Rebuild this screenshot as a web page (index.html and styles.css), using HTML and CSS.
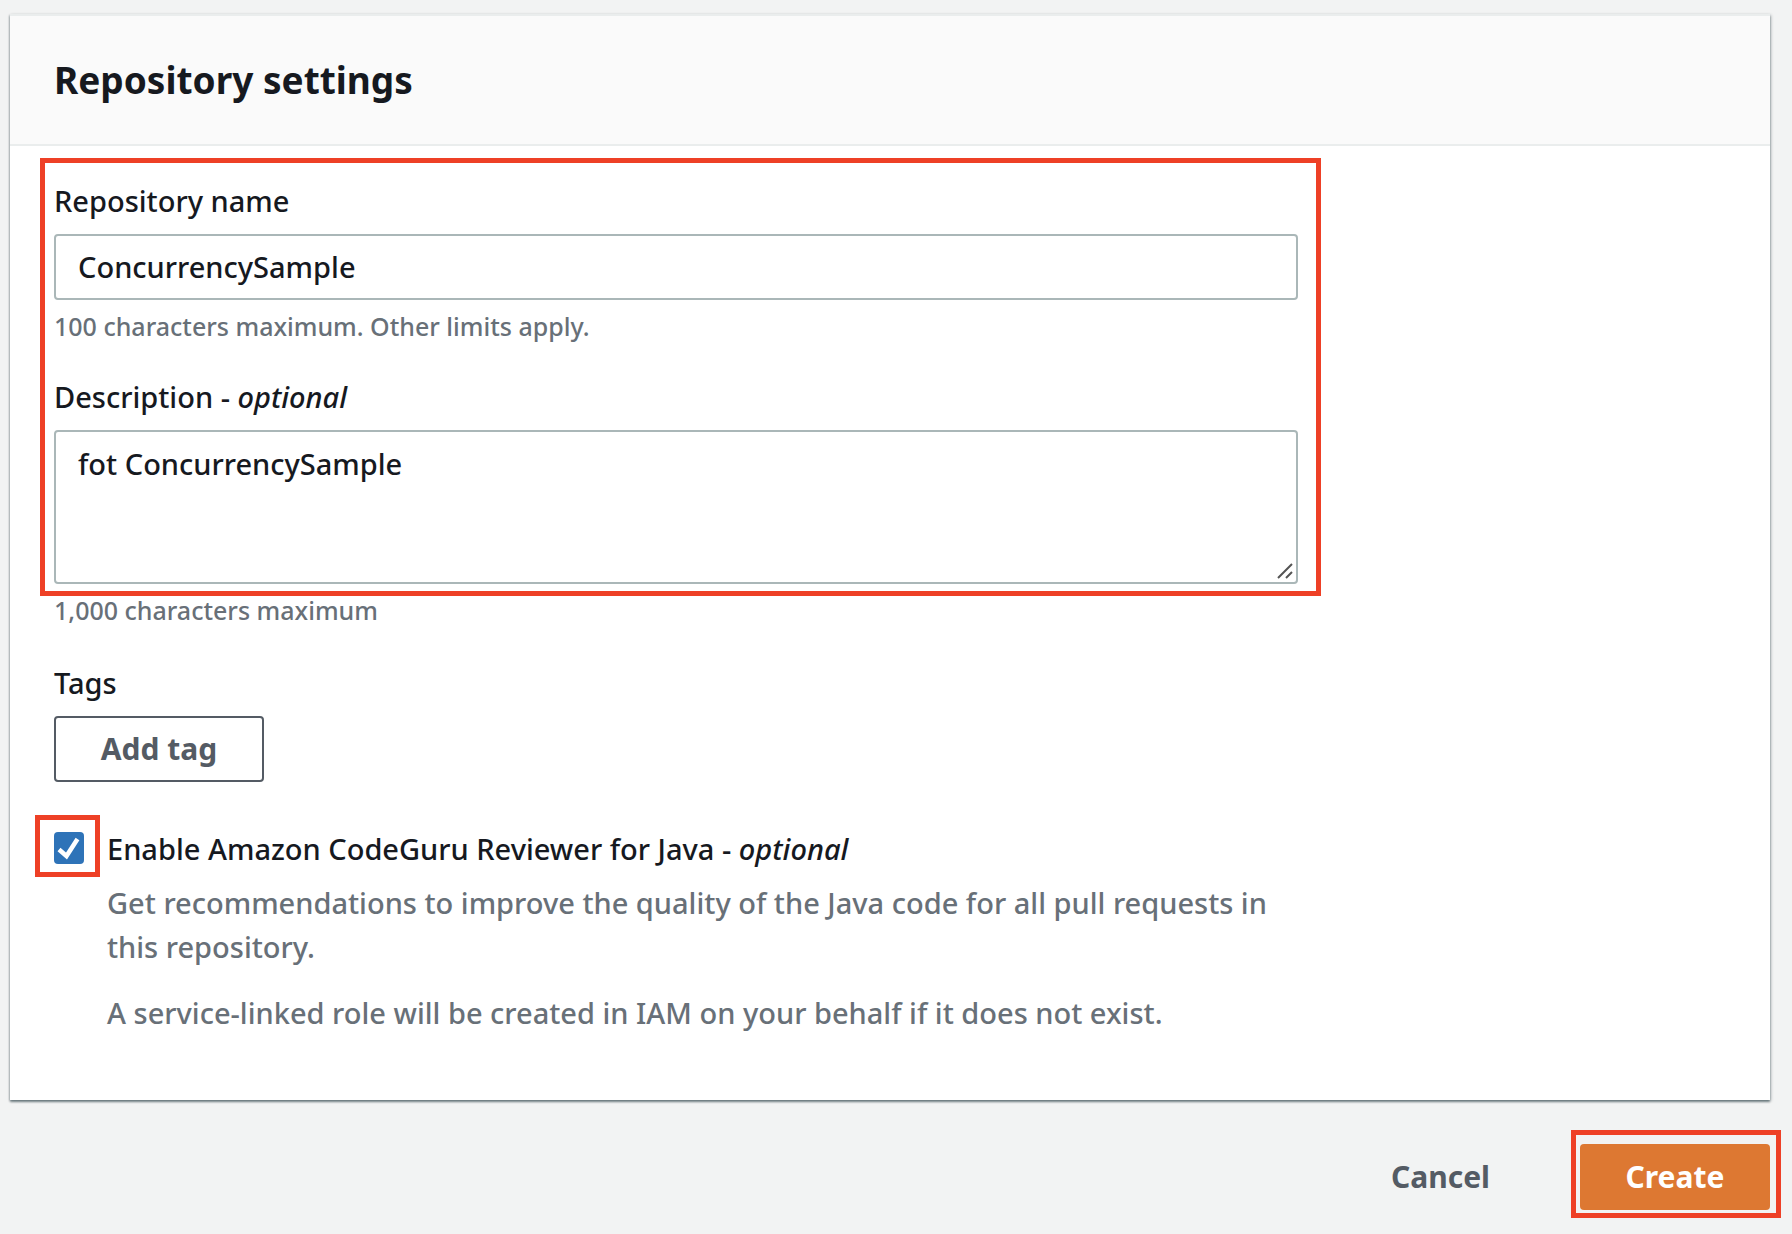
FILE: index.html
```html
<!DOCTYPE html>
<html lang="en">
<head>
  <meta charset="utf-8">
  <meta name="viewport" content="width=device-width, initial-scale=1">
  <title>Create repository</title>
  <link rel="stylesheet" href="styles.css">
</head>
<body>
  <form class="page">
    <section class="card">
      <header class="card-header">
        <h2 class="card-title">Repository settings</h2>
      </header>
      <div class="card-body">
        <div class="fields marked marked-fields">
          <div class="field">
            <label class="label" for="repo-name">Repository name</label>
            <input class="control input" id="repo-name" type="text" value="ConcurrencySample" aria-describedby="repo-name-hint">
            <p class="hint" id="repo-name-hint">100 characters maximum. Other limits apply.</p>
          </div>
          <div class="field">
            <label class="label" for="repo-desc">Description - <em>optional</em></label>
            <div class="textarea-wrap">
              <textarea class="control textarea" id="repo-desc" aria-describedby="repo-desc-hint">fot ConcurrencySample</textarea>
              <svg class="grip" viewBox="0 0 16 16" aria-hidden="true"><path d="M1 15 15 1M9 15l6-6"/></svg>
            </div>
          </div>
        </div>
        <p class="hint" id="repo-desc-hint">1,000 characters maximum</p>

        <div class="field tags">
          <h3 class="label">Tags</h3>
          <button class="button button-normal" type="button">Add tag</button>
        </div>

        <div class="option">
          <span class="tick marked marked-tick"><input class="checkbox" id="codeguru" type="checkbox" checked aria-describedby="codeguru-text"></span>
          <div class="option-content">
            <label class="option-label" for="codeguru">Enable Amazon CodeGuru Reviewer for Java - <em>optional</em></label>
            <div class="option-text" id="codeguru-text">
              <p>Get recommendations to improve the quality of the Java code for all pull requests in this repository.</p>
              <p>A service-linked role will be created in IAM on your behalf if it does not exist.</p>
            </div>
          </div>
        </div>
      </div>
    </section>

    <div class="actions">
      <button class="button button-link" type="button">Cancel</button>
      <span class="marked marked-create"><button class="button button-primary" type="submit">Create</button></span>
    </div>
  </form>
</body>
</html>
```
FILE: styles.css
```css
*,
*::before,
*::after {
  box-sizing: border-box;
}

body {
  margin: 0;
  background: #f2f3f3;
  color: #16191f;
  font-family: "Noto Sans", "Open Sans", sans-serif;
  font-size: 29px;
  font-weight: 500;
  line-height: 44px;
}

h2,
h3,
p {
  margin: 0;
}

.page {
  padding: 14px 22px 24px 10px;
}

/* Card */
.card {
  background: #fff;
  border-top: 2px solid #eaeded;
  box-shadow: 0 2px 2px 0 rgba(0, 28, 36, 0.4), 1px 1px 3px 0 rgba(0, 28, 36, 0.25), -1px 1px 2px 0 rgba(0, 28, 36, 0.15);
}

.card-header {
  padding: 42px 44px;
  background: #fafafa;
  border-bottom: 2px solid #eaeded;
}

.card-title {
  font-size: 37px;
  line-height: 44px;
  font-weight: 700;
}

.card-body {
  padding: 35px 44px 65px;
}

/* Fields */
.fields {
  display: flex;
  flex-direction: column;
  gap: 32px;
  max-width: 1244px;
}

.field {
  display: flex;
  flex-direction: column;
  align-items: flex-start;
}

.label {
  margin-bottom: 13px;
  font-size: 29px;
  line-height: 40px;
  font-weight: 500;
}

.control {
  display: block;
  width: 100%;
  margin: 0;
  border: 2px solid #aab7b8;
  border-radius: 4px;
  background: #fff;
  color: inherit;
  font: inherit;
}

.input {
  height: 66px;
  padding: 0 22px 2px;
}

.textarea-wrap {
  position: relative;
  width: 100%;
}

.textarea {
  height: 154px;
  padding: 10px 22px;
}

.textarea::-webkit-resizer {
  display: none;
}

.grip {
  position: absolute;
  right: 5px;
  bottom: 5px;
  width: 16px;
  height: 16px;
  fill: none;
  stroke: #545454;
  stroke-width: 2;
  pointer-events: none;
}

.hint {
  margin-top: 7px;
  color: #687078;
  font-size: 25px;
  line-height: 38px;
}

.tags {
  margin-top: 34px;
}

/* Checkbox option */
.option {
  display: flex;
  gap: 23px;
  max-width: 1244px;
  margin-top: 45px;
}

.tick {
  display: flex;
  flex: none;
  align-self: flex-start;
  margin-top: 5px;
}

.checkbox {
  appearance: none;
  width: 30px;
  height: 32px;
  margin: 0;
  border-radius: 4px;
  border: 2px solid #687078;
}

.checkbox:checked {
  border: 0;
  background: #2e73b8 url("data:image/svg+xml,%3Csvg xmlns='http://www.w3.org/2000/svg' viewBox='0 0 30 32'%3E%3Cpath d='M5 17.500l7.500 6.500L23.500 7' fill='none' stroke='%23fff' stroke-width='4.500'/%3E%3C/svg%3E") center / 30px 32px no-repeat;
}

.option-content {
  display: flex;
  flex-direction: column;
  gap: 10px;
}

.option-text {
  display: flex;
  flex-direction: column;
  gap: 22px;
  color: #687078;
}

/* Buttons */
.button {
  height: 66px;
  padding: 0 42px;
  border: 2px solid transparent;
  border-radius: 4px;
  background: transparent;
  color: #545b64;
  font: inherit;
  font-size: 30px;
  font-weight: 700;
}

.button-normal {
  min-width: 210px;
  border-color: #545b64;
  background: #fff;
}

.button-primary {
  min-width: 190px;
  background: #dd7832;
  color: #fff;
}

.actions {
  display: flex;
  justify-content: flex-end;
  gap: 46px;
  margin-top: 44px;
}

/* Red highlight frames drawn over the form */
.marked {
  position: relative;
}

.marked::after {
  content: "";
  position: absolute;
  border: 5px solid #ee4026;
  pointer-events: none;
}

.marked-fields::after {
  inset: -23px -23px -12px -14px;
}

.marked-tick::after {
  inset: -17px -16px -13px -19px;
}

.marked-create::after {
  inset: -14px -11px -8px -9px;
}
```
